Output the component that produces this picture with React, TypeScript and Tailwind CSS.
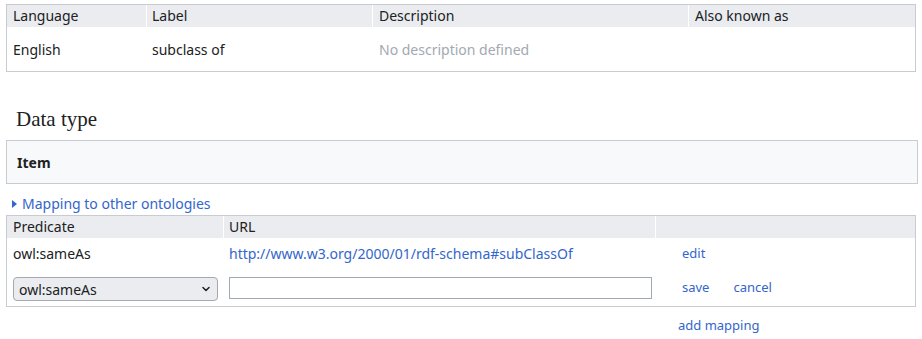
import { ChevronDown } from "lucide-react"

const font = { fontFamily: '"Noto Sans", "Open Sans", sans-serif' }

function TermsTable() {
  return (
    <div className="ml-[6px] mt-[4px] w-[910px] border border-[#c8ccd1]">
      <div className="flex h-[22px] gap-px bg-white text-[14px] leading-[22px]">
        <div className="w-[139px] bg-[#eaecf0] px-[6px]">Language</div>
        <div className="w-[225px] bg-[#eaecf0] px-[5px]">Label</div>
        <div className="w-[315px] bg-[#eaecf0] px-[6px]">Description</div>
        <div className="w-[226px] bg-[#eaecf0] px-[6px]">Also known as</div>
      </div>
      <div className="flex h-[44px] items-center gap-px text-[14px]">
        <div className="w-[139px] px-[6px]">English</div>
        <div className="w-[225px] px-[5px]">subclass of</div>
        <div className="w-[315px] px-[6px] text-[#a2a9b1]">No description defined</div>
        <div className="w-[226px] px-[6px]" />
      </div>
    </div>
  )
}

function MappingTable() {
  return (
    <div className="ml-[6px] w-[910px] border border-[#c8ccd1]">
      <div className="flex h-[22px] gap-px bg-white text-[14px] leading-[22px]">
        <div className="w-[216px] bg-[#eaecf0] px-[6px]">Predicate</div>
        <div className="w-[431px] bg-[#eaecf0] px-[5px]">URL</div>
        <div className="w-[259px] bg-[#eaecf0]" />
      </div>
      <div className="flex h-[30px] items-center gap-px text-[14px]">
        <div className="w-[216px] px-[6px]">owl:sameAs</div>
        <div className="w-[431px] px-[5px] text-[#3366cc]">http://www.w3.org/2000/01/rdf-schema#subClassOf</div>
        <div className="w-[259px] pl-[26px] pt-[2px] text-[13px] text-[#3366cc]">edit</div>
      </div>
      <div className="flex h-[38px] items-start gap-px pt-[9px] text-[14px]">
        <div className="w-[216px] px-[6px]">
          <div className="relative h-[24px] w-[205px]">
            <select
              className="h-[24px] w-[205px] appearance-none rounded-[4px] border border-[#a2a9b1] bg-[#eaecf0] pl-[5px] text-[14px] text-[#202122] outline-none"
              style={font}
              defaultValue="owl:sameAs"
            >
              <option>owl:sameAs</option>
              <option>owl:equivalentClass</option>
              <option>owl:equivalentProperty</option>
            </select>
            <ChevronDown className="pointer-events-none absolute right-[6px] top-[6px] h-[12px] w-[12px] text-[#202122]" strokeWidth={3} />
          </div>
        </div>
        <div className="w-[431px] px-[5px]">
          <input className="h-[22px] w-[423px] border border-[#a2a9b1] bg-white outline-none" />
        </div>
        <div className="flex w-[259px] gap-[24px] pl-[26px] text-[13px] leading-[20px] text-[#3366cc]">
          <span>save</span>
          <span>cancel</span>
        </div>
      </div>
    </div>
  )
}

export default function App() {
  return (
    <div className="h-[339px] w-[922px] overflow-hidden bg-white text-[#202122]" style={font}>
      <TermsTable />
      <h2 className="ml-[16px] mt-[32px] h-[30px] text-[21px] leading-[30px]" style={{ fontFamily: '"Liberation Serif", serif' }}>
        Data type
      </h2>
      <div className="ml-[6px] mt-[6px] flex h-[44px] w-[912px] items-center border border-[#c8ccd1] bg-[#f8f9fa] px-[10px] text-[14px] font-bold">
        Item
      </div>
      <div className="ml-[12px] mt-[7px] flex h-[24px] items-center gap-[5px] text-[14px] text-[#3366cc]">
        <svg width="5" height="8" viewBox="0 0 5 8" className="mt-px">
          <path d="M0 0 L5 4 L0 8 Z" fill="#3366cc" />
        </svg>
        <span>Mapping to other ontologies</span>
      </div>
      <MappingTable />
      <div className="ml-[678px] mt-[9px] text-[13px] text-[#3366cc]">add mapping</div>
    </div>
  )
}
